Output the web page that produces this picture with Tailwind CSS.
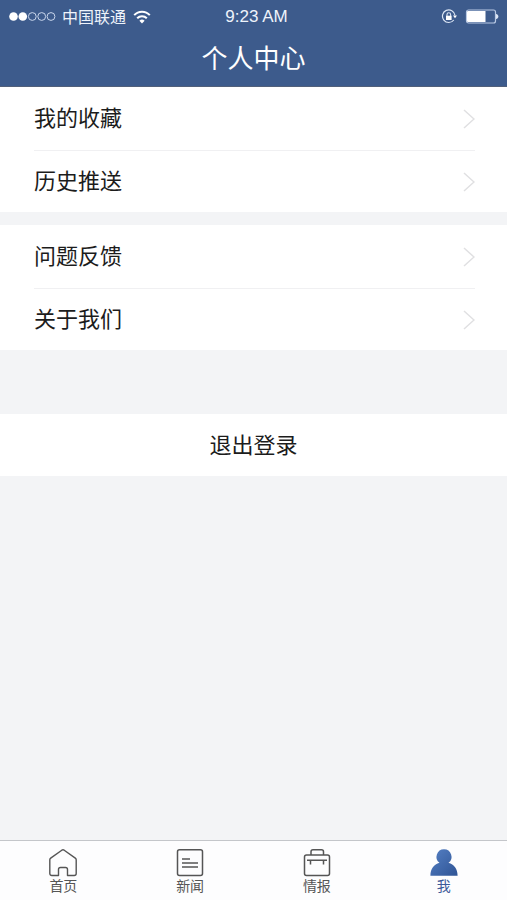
<!DOCTYPE html>
<html lang="zh-CN">
<head>
<meta charset="utf-8">
<meta name="viewport" content="width=device-width, initial-scale=1">
<title>个人中心</title>
<script src="https://cdn.jsdelivr.net/npm/@tailwindcss/browser@4"></script>
</head>
<body class="min-h-screen flex flex-col bg-[#f3f4f6] text-[#1c1c1c] font-['Liberation_Sans','Noto_Sans_CJK_SC',sans-serif]">
<header class="bg-[#3d5b8c] text-white border-b border-[#52607a]">
  <div class="grid grid-cols-3 items-center h-8 px-2 text-[#eef3fb]">
    <div class="flex items-center gap-1.5">
      <svg class="w-12 h-3 shrink-0" viewBox="0 0 48 12" fill="none" stroke="#c9d6ec" aria-hidden="true">
        <circle cx="5.500" cy="5.500" r="4.300" fill="#fff" stroke="none"/><circle cx="14.800" cy="5.500" r="4.300" fill="#fff" stroke="none"/>
        <circle cx="24.300" cy="5.500" r="3.900"/><circle cx="33.700" cy="5.500" r="3.900"/><circle cx="43" cy="5.500" r="3.900"/>
      </svg>
      <span class="pt-0.5 text-base leading-8 whitespace-nowrap">中国联通</span>
      <svg class="w-5 h-4 shrink-0" viewBox="0 0 20 16" fill="none" stroke="#fff" stroke-width="2" aria-hidden="true">
        <path d="M2.200 6.200a10.500 10.500 0 0 1 15.600 0"/><path d="M5.200 9.300a6.600 6.600 0 0 1 9.600 0"/>
        <path d="M10 14.500l-2.600-2.700a3.700 3.700 0 0 1 5.200 0z" fill="#fff" stroke="none"/>
      </svg>
    </div>
    <time class="text-center text-[17px] leading-8 pl-1.5">9:23 AM</time>
    <div class="flex items-center justify-end gap-2">
      <svg class="w-4 h-4" viewBox="0 0 16 16" fill="none" stroke="#dce6f5" aria-hidden="true">
        <path d="M14 6.300A6.300 6.300 0 1 0 12.800 11" stroke-width="1.200"/>
        <path d="M12 6.500h4l-2 2.800z" fill="#fff" stroke="none"/>
        <rect x="5" y="6.700" width="5.600" height="4.300" fill="#fff" stroke="none"/><path d="M6 7V5.500a1.800 1.800 0 0 1 3.600 0V7" stroke-width="1.100"/>
      </svg>
      <svg class="w-[34px] h-4" viewBox="0 0 34 16" fill="none" aria-hidden="true">
        <rect x="1.500" y="1" width="29" height="13" rx="2" stroke="#b9c9e4" stroke-width="1.200"/>
        <path d="M3 2h17.500v11H3a1 1 0 0 1-1-1V3a1 1 0 0 1 1-1z" fill="#fff"/>
        <path d="M31 5c3.200.5 3.200 4.500 0 5z" fill="#dce6f5"/>
      </svg>
    </div>
  </div>
  <h1 class="h-[54px] text-center text-[26px] leading-[54px] font-normal">个人中心</h1>
</header>
<main class="flex-1 text-[22px]">
  <nav class="bg-white pl-[34px] pr-8" aria-label="我的内容">
    <a href="#favorites" class="flex items-center justify-between h-16 border-b border-[#f0f0f2]"><span>我的收藏</span>
      <svg class="w-3 h-5" viewBox="0 0 12 20" fill="none" stroke="#e0e0e2" stroke-width="1.500" aria-hidden="true"><path d="M1 1l10 9-10 9"/></svg></a>
    <a href="#history" class="flex items-center justify-between h-[61px]"><span>历史推送</span>
      <svg class="w-3 h-5" viewBox="0 0 12 20" fill="none" stroke="#e0e0e2" stroke-width="1.500" aria-hidden="true"><path d="M1 1l10 9-10 9"/></svg></a>
  </nav>
  <nav class="mt-[13px] bg-white pl-[34px] pr-8" aria-label="帮助">
    <a href="#feedback" class="flex items-center justify-between h-16 border-b border-[#f0f0f2]"><span>问题反馈</span>
      <svg class="w-3 h-5" viewBox="0 0 12 20" fill="none" stroke="#e0e0e2" stroke-width="1.500" aria-hidden="true"><path d="M1 1l10 9-10 9"/></svg></a>
    <a href="#about" class="flex items-center justify-between h-[61px]"><span>关于我们</span>
      <svg class="w-3 h-5" viewBox="0 0 12 20" fill="none" stroke="#e0e0e2" stroke-width="1.500" aria-hidden="true"><path d="M1 1l10 9-10 9"/></svg></a>
  </nav>
  <button type="button" class="block w-full h-[62px] mt-16 bg-white">退出登录</button>
</main>
<nav class="grid grid-cols-4 h-[60px] pt-2 bg-[#fdfdfe] border-t border-[#c4c6ca] text-sm leading-[18px] text-[#555]" aria-label="主导航">
  <a href="#home" class="flex flex-col items-center">
    <svg class="w-7 h-7 shrink-0" viewBox="0 0 28 28" fill="none" stroke="#555" stroke-width="1.400" stroke-linejoin="round" aria-hidden="true"><path d="M.8 10.800Q.8 9.800 1.700 9.100L12.800 1.200Q14 .4 15.200 1.200L26.300 9.100Q27.200 9.800 27.200 10.800V24.500a2 2 0 0 1-2 2H18.500V20.500a2 2 0 0 0-2-2h-5a2 2 0 0 0-2 2V26.500H2.800a2 2 0 0 1-2-2z"/></svg>
    <span>首页</span></a>
  <a href="#news" class="flex flex-col items-center">
    <svg class="w-7 h-7 shrink-0" viewBox="0 0 28 28" fill="none" stroke="#555" stroke-width="1.500" aria-hidden="true"><rect x="1.500" y=".8" width="25" height="25.700" rx="2"/><path d="M6 10h8M6 14h16M6 18h16"/></svg>
    <span>新闻</span></a>
  <a href="#intel" class="flex flex-col items-center">
    <svg class="w-7 h-7 shrink-0" viewBox="0 0 28 28" fill="none" stroke="#555" stroke-width="1.500" aria-hidden="true"><rect x="1.500" y="6" width="25" height="20.500" rx="2"/><path d="M8 6V2.800a2 2 0 0 1 2-2h8.500a2 2 0 0 1 2 2V6M4 11.300h20M7.500 11.300V15.500M20.500 11.300V15.500"/></svg>
    <span>情报</span></a>
  <a href="#me" aria-current="page" class="flex flex-col items-center text-[#3d5b9a]">
    <svg class="w-7 h-7 shrink-0" viewBox="0 0 28 28" aria-hidden="true"><defs><linearGradient id="person" x1="0" y1="0" x2="1" y2="1"><stop offset="0" stop-color="#5580c4"/><stop offset="1" stop-color="#2f5495"/></linearGradient></defs><path fill="url(#person)" d="M14 .3a7.500 7.500 0 0 1 4.500 13.500C24 15.500 27.600 20 27.600 26.800H.4C.4 20 4 15.500 9.500 13.800A7.500 7.500 0 0 1 14 .3z"/></svg>
    <span>我</span></a>
</nav>
</body>
</html>
